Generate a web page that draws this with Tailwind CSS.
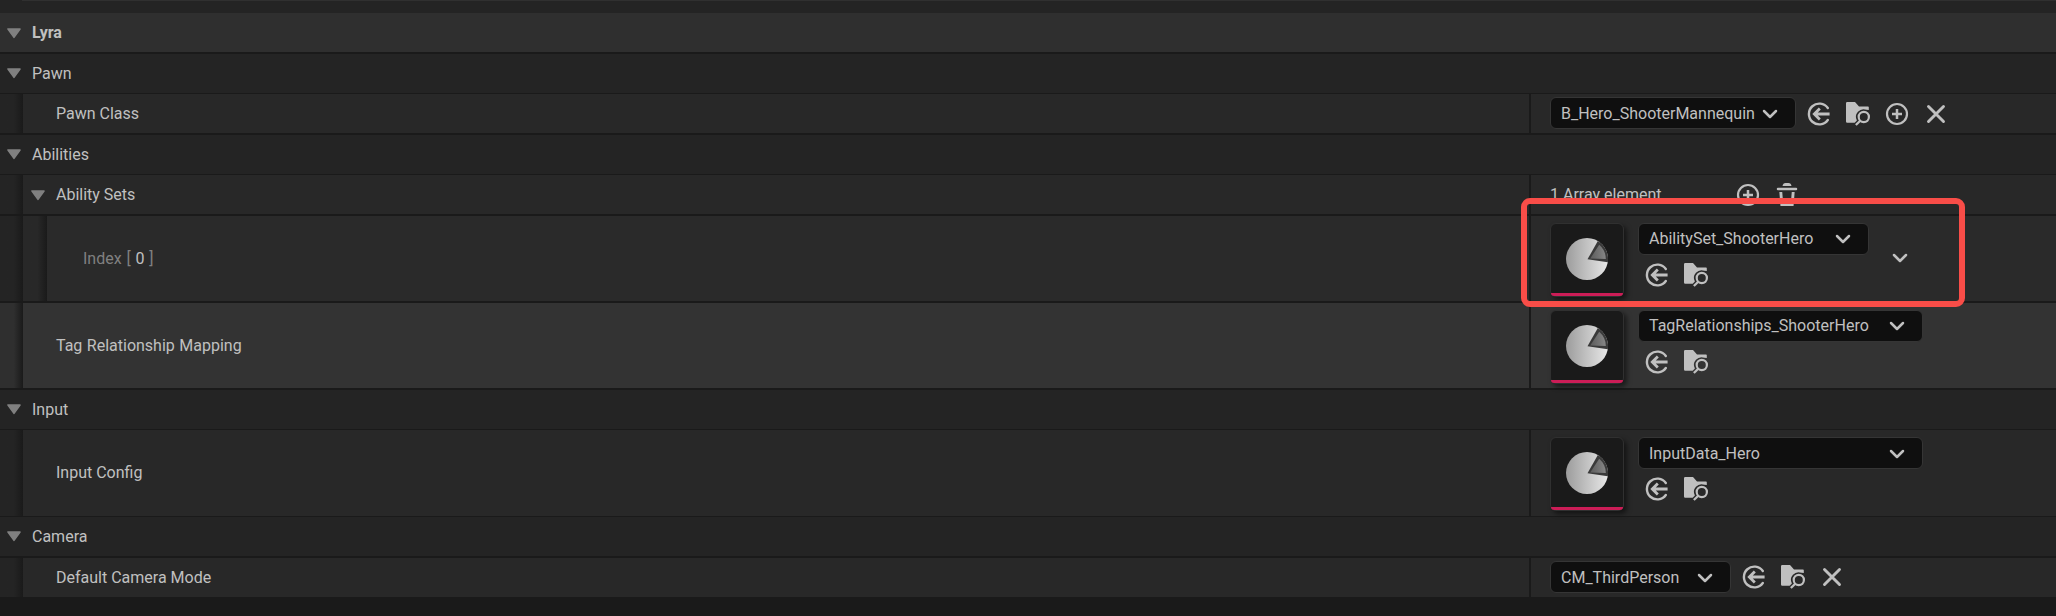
<!DOCTYPE html>
<html lang="en">
<head>
    <meta charset="UTF-8">
    <meta name="viewport" content="width=device-width, initial-scale=1.0">
    <title>Lyra Pawn Data</title>
    <script src="https://cdn.jsdelivr.net/npm/@tailwindcss/browser@4"></script>
</head>
<body class="relative w-[2056px] h-[616px] overflow-hidden bg-[#1a1a1a] font-[Roboto,sans-serif] text-base leading-5 text-[#c0c0c0]">

    <!-- Shared icons -->
    <svg class="absolute size-0">
        <defs>
            <linearGradient id="pieFill" x1="0" y1="0" x2="1" y2="0">
                <stop offset="0" stop-color="#9c9c9c"/>
                <stop offset="1" stop-color="#e8e8e8"/>
            </linearGradient>
            <linearGradient id="sliceFill" x1="0" y1="0" x2="1" y2="0">
                <stop offset="0" stop-color="#5c5c5c"/>
                <stop offset="1" stop-color="#868686"/>
            </linearGradient>
        </defs>
        <symbol id="expander" viewBox="0 0 16 11">
            <path d="M2 1h12L8 9.3z" fill="#808080" stroke="#808080" stroke-width="1.6" stroke-linejoin="round"/>
        </symbol>
        <symbol id="chevron" viewBox="0 0 16 10">
            <path d="M2 2l6 6 6-6" fill="none" stroke="#c0c0c0" stroke-width="2.5" stroke-linecap="round" stroke-linejoin="round"/>
        </symbol>
        <symbol id="use" viewBox="0 0 24 24">
            <path d="M20.8 6A10.4 10.4 0 1 0 20.8 18" fill="none" stroke="#c0c0c0" stroke-width="2.4" stroke-linecap="round"/>
            <path d="M22.6 12H7.500M12.800 6.500L7.300 12l5.500 5.500" fill="none" stroke="#c0c0c0" stroke-width="2.800"/>
        </symbol>
        <symbol id="browse" viewBox="0 0 24 24">
            <path d="M1.2 0H9l4 4.400h9q.8 0 .8.8V8L20.500 7.800A7.700 7.700 0 0 0 10.900 18.600L8.700 20.800H1.200Q0 20.800 0 19.600V1.200Q0 0 1.200 0z" fill="#c0c0c0"/>
            <circle cx="17.8" cy="15" r="5.100" fill="none" stroke="#c0c0c0" stroke-width="2.200"/>
            <path d="M14.200 18.700L9.900 23" stroke="#c0c0c0" stroke-width="2.300"/>
        </symbol>
        <symbol id="add" viewBox="0 0 24 24">
            <circle cx="12" cy="12" r="10" fill="none" stroke="#c0c0c0" stroke-width="2.200"/>
            <path d="M12 7v10M7 12h10" stroke="#c0c0c0" stroke-width="2.500"/>
        </symbol>
        <symbol id="clear" viewBox="0 0 24 24">
            <path d="M4.500 4.500l15 15M19.500 4.500l-15 15" stroke="#c0c0c0" stroke-width="2.900" stroke-linecap="round"/>
        </symbol>
        <symbol id="trash" viewBox="0 0 24 24">
            <path d="M7.500 3q.5-3 3-3h3q2.500 0 3 3z" fill="#c0c0c0"/>
            <path d="M3 6h18" stroke="#c0c0c0" stroke-width="2.500" stroke-linecap="round"/>
            <path d="M5.800 9l1 12.500h10.400l1-12.500" fill="none" stroke="#c0c0c0" stroke-width="2.900"/>
        </symbol>
        <symbol id="pie" viewBox="0 0 42 42">
            <circle cx="21" cy="21" r="21" fill="url(#pieFill)"/>
            <path d="M21.500 21.300L31.800 3A21 21 0 0 1 41.800 24.200z" fill="#3a3a3a"/>
            <path d="M24.200 20.600L33.200 6.800A19 19 0 0 1 39.800 20.900z" fill="url(#sliceFill)"/>
        </symbol>
    </svg>

    <!-- Bottom edge of the row scrolled out of view -->
    <div class="h-[13px] bg-[#242424]">
        <div class="ml-[22px] h-px bg-[#303030]"></div>
    </div>

    <!-- Lyra -->
    <div class="flex h-[41px] items-center border-b-2 border-[#1a1a1a] bg-[#2f2f2f] pl-1.5">
        <svg class="mt-px h-[11px] w-4"><use href="#expander"/></svg>
        <span class="ml-2.5 font-bold">Lyra</span>
    </div>

    <!-- Pawn -->
    <div class="flex h-10 items-center border-b border-[#1a1a1a] bg-[#242424] pl-1.5">
        <svg class="h-[11px] w-4"><use href="#expander"/></svg>
        <span class="ml-2.5">Pawn</span>
    </div>
    <div class="flex h-[41px] border-b-2 border-[#1a1a1a] bg-[#282828]">
        <div class="w-[23px] bg-linear-to-r from-[#242424] from-60% to-[#1a1a1a]"></div>
        <div class="flex w-[1508px] items-center border-r-2 border-[#1a1a1a] pl-[33px]">Pawn Class</div>
        <div class="flex items-start pl-[19px] pt-[3px]">
            <div class="flex h-8 w-[246px] items-center rounded-md border border-[#353535] bg-[#0f0f0f] pl-2.5 pt-px">
                <span>B_Hero_ShooterMannequin</span>
                <svg class="ml-auto mr-[17px] h-2.5 w-4"><use href="#chevron"/></svg>
            </div>
            <div class="ml-[11px] mt-[5px] flex gap-[15px]">
                <svg class="size-6"><use href="#use"/></svg>
                <svg class="size-6"><use href="#browse"/></svg>
                <svg class="size-6"><use href="#add"/></svg>
                <svg class="size-6"><use href="#clear"/></svg>
            </div>
        </div>
    </div>

    <!-- Abilities -->
    <div class="flex h-10 items-center border-b border-[#1a1a1a] bg-[#242424] pl-1.5">
        <svg class="h-[11px] w-4"><use href="#expander"/></svg>
        <span class="ml-2.5">Abilities</span>
    </div>
    <div class="flex h-[41px] border-b-2 border-[#1a1a1a] bg-[#282828]">
        <div class="w-[23px] bg-linear-to-r from-[#242424] from-60% to-[#1a1a1a]"></div>
        <div class="flex w-[1508px] items-center border-r-2 border-[#1a1a1a] pl-[7px]">
            <svg class="mt-px h-[11px] w-4"><use href="#expander"/></svg>
            <span class="ml-2.5">Ability Sets</span>
        </div>
        <div class="flex items-center pl-[19px]">
            <span class="w-[186px]">1 Array element</span>
            <div class="mt-px flex gap-[15px]">
                <svg class="size-6"><use href="#add"/></svg>
                <svg class="size-6"><use href="#trash"/></svg>
            </div>
        </div>
    </div>
    <div class="flex h-[87px] border-b-2 border-[#1a1a1a] bg-[#2a2a2a]">
        <div class="w-[23px] bg-linear-to-r from-[#242424] from-60% to-[#1a1a1a]"></div>
        <div class="w-6 bg-linear-to-r from-[#282828] from-60% to-[#1a1a1a]"></div>
        <div class="flex w-[1484px] items-center border-r-2 border-[#1a1a1a] pl-9 text-[#808080]">
            <span class="whitespace-pre [word-spacing:0.8px]">Index [ <span class="text-[#c0c0c0]">0</span> ]</span>
        </div>
        <div class="flex items-start pl-[19px] pt-[7px]">
            <div class="flex size-[74px] flex-col items-center rounded-md border border-[#303030] bg-[#1a1a1a] shadow-[3px_3px_5px_#00000080]">
                <svg class="mr-px mt-[14px] size-[42px]"><use href="#pie"/></svg>
                <div class="mt-auto h-[3px] w-full rounded-b-sm bg-[#cc1d57]"></div>
            </div>
            <div class="ml-[14px]">
                <div class="flex h-8 w-[231px] items-center rounded-md border border-[#353535] bg-[#0f0f0f] pl-2.5">
                    <span>AbilitySet_ShooterHero</span>
                    <svg class="ml-auto mr-[17px] h-2.5 w-4"><use href="#chevron"/></svg>
                </div>
                <div class="ml-[7px] mt-2 flex gap-[15px]">
                    <svg class="size-6"><use href="#use"/></svg>
                    <svg class="size-6"><use href="#browse"/></svg>
                </div>
            </div>
            <svg class="ml-[23px] mt-[30px] h-2.5 w-4"><use href="#chevron"/></svg>
        </div>
    </div>
    <div class="flex h-[87px] border-b-2 border-[#1a1a1a] bg-[#333333]">
        <div class="w-[23px] bg-linear-to-r from-[#2f2f2f] from-60% to-[#1a1a1a]"></div>
        <div class="flex w-[1508px] items-center border-r-2 border-[#1a1a1a] pl-[33px] [word-spacing:0.5px]">Tag Relationship Mapping</div>
        <div class="flex items-start pl-[19px] pt-[7px]">
            <div class="flex size-[74px] flex-col items-center rounded-md border border-[#303030] bg-[#1a1a1a] shadow-[3px_3px_5px_#00000080]">
                <svg class="mr-px mt-[14px] size-[42px]"><use href="#pie"/></svg>
                <div class="mt-auto h-[3px] w-full rounded-b-sm bg-[#cc1d57]"></div>
            </div>
            <div class="ml-[14px]">
                <div class="flex h-8 w-[285px] items-center rounded-md border border-[#353535] bg-[#0f0f0f] pl-2.5">
                    <span>TagRelationships_ShooterHero</span>
                    <svg class="ml-auto mr-[17px] h-2.5 w-4"><use href="#chevron"/></svg>
                </div>
                <div class="ml-[7px] mt-2 flex gap-[15px]">
                    <svg class="size-6"><use href="#use"/></svg>
                    <svg class="size-6"><use href="#browse"/></svg>
                </div>
            </div>
        </div>
    </div>

    <!-- Input -->
    <div class="flex h-10 items-center border-b border-[#1a1a1a] bg-[#242424] pl-1.5">
        <svg class="h-[11px] w-4"><use href="#expander"/></svg>
        <span class="ml-2.5">Input</span>
    </div>
    <div class="flex h-[87px] border-b border-[#1a1a1a] bg-[#282828]">
        <div class="w-[23px] bg-linear-to-r from-[#242424] from-60% to-[#1a1a1a]"></div>
        <div class="flex w-[1508px] items-center border-r-2 border-[#1a1a1a] pl-[33px]">Input Config</div>
        <div class="flex items-start pl-[19px] pt-[7px]">
            <div class="flex size-[74px] flex-col items-center rounded-md border border-[#303030] bg-[#1a1a1a] shadow-[3px_3px_5px_#00000080]">
                <svg class="mr-px mt-[14px] size-[42px]"><use href="#pie"/></svg>
                <div class="mt-auto h-[3px] w-full rounded-b-sm bg-[#cc1d57]"></div>
            </div>
            <div class="ml-[14px]">
                <div class="flex h-8 w-[285px] items-center rounded-md border border-[#353535] bg-[#0f0f0f] pl-2.5 pt-px">
                    <span>InputData_Hero</span>
                    <svg class="ml-auto mr-[17px] h-2.5 w-4"><use href="#chevron"/></svg>
                </div>
                <div class="ml-[7px] mt-2 flex gap-[15px]">
                    <svg class="size-6"><use href="#use"/></svg>
                    <svg class="size-6"><use href="#browse"/></svg>
                </div>
            </div>
        </div>
    </div>

    <!-- Camera -->
    <div class="flex h-[41px] items-center border-b-2 border-[#1a1a1a] bg-[#242424] pl-1.5">
        <svg class="h-[11px] w-4"><use href="#expander"/></svg>
        <span class="ml-2.5">Camera</span>
    </div>
    <div class="flex h-[39px] bg-[#282828]">
        <div class="w-[23px] bg-linear-to-r from-[#242424] from-60% to-[#1a1a1a]"></div>
        <div class="flex w-[1508px] items-center border-r-2 border-[#1a1a1a] pl-[33px]">Default Camera Mode</div>
        <div class="flex items-start pl-[19px] pt-[3px]">
            <div class="flex h-8 w-[181px] items-center rounded-md border border-[#353535] bg-[#0f0f0f] pl-2.5 pt-px">
                <span>CM_ThirdPerson</span>
                <svg class="ml-auto mr-[17px] h-2.5 w-4"><use href="#chevron"/></svg>
            </div>
            <div class="ml-[11px] mt-1 flex gap-[15px]">
                <svg class="size-6"><use href="#use"/></svg>
                <svg class="size-6"><use href="#browse"/></svg>
                <svg class="size-6"><use href="#clear"/></svg>
            </div>
        </div>
    </div>

    <!-- Highlight around the ability set entry -->
    <div class="absolute left-[1521px] top-[198px] h-[109px] w-[444px] rounded-[9px] border-6 border-[#f94d48]"></div>
</body>
</html>
